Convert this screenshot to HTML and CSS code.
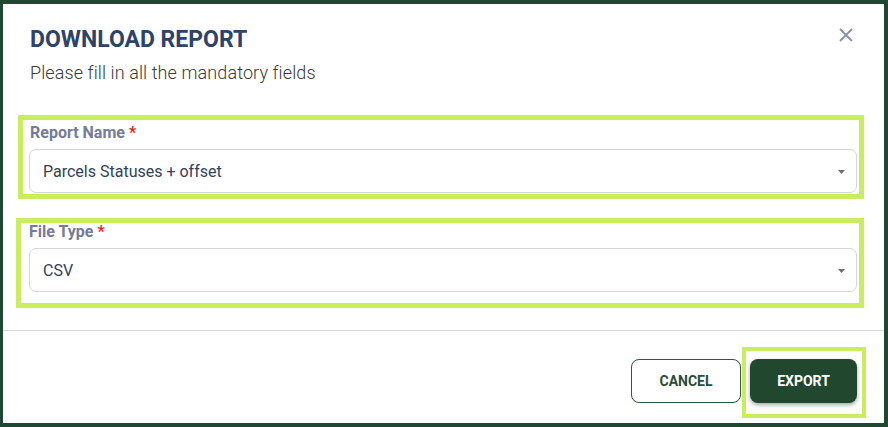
FILE: index.html
```html
<!DOCTYPE html>
<html>
<head>
    <title>Download Report</title>
    <link rel="stylesheet" href="styles.css">
</head>
<body>
    <div class="modal">
        <div class="modal-header">
            <div>
                <h1>DOWNLOAD REPORT</h1>
                <p class="subtitle">Please fill in all the mandatory fields</p>
            </div>
            <button class="close-button" aria-label="Close">
                <svg width="14" height="14" viewBox="0 0 14 14">
                    <path d="M1 1 L13 13 M13 1 L1 13" stroke="#8891a9" stroke-width="1.8" fill="none"/>
                </svg>
            </button>
        </div>

        <div class="field field-report">
            <label>Report Name <span class="required">*</span></label>
            <div class="select">
                <span>Parcels Statuses + offset</span>
                <svg class="caret" width="7" height="4" viewBox="0 0 7 4"><path d="M0 0 H7 L3.5 4 Z" fill="#6f6f6f"/></svg>
            </div>
        </div>

        <div class="field field-type">
            <label>File Type <span class="required">*</span></label>
            <div class="select">
                <span>CSV</span>
                <svg class="caret" width="7" height="4" viewBox="0 0 7 4"><path d="M0 0 H7 L3.5 4 Z" fill="#6f6f6f"/></svg>
            </div>
        </div>

        <div class="modal-footer">
            <button class="cancel-button">CANCEL</button>
            <div class="export-wrap">
                <button class="export-button">EXPORT</button>
            </div>
        </div>
    </div>
</body>
</html>
```

FILE: styles.css
```css
body { margin: 0; background-color: #1f4832; font-family: Roboto, "Liberation Sans", sans-serif; }
.modal {
    margin: 4px 4px 4px 3px;
    height: 419px;
    background-color: #fff;
    display: flex;
    flex-direction: column;
}
.modal-header {
    display: flex;
    justify-content: space-between;
    align-items: flex-start;
    padding: 23px 31px 0 27px;
}
h1 { margin: 0; font-size: 23px; line-height: 26px; font-weight: 700; color: #2d4369; }
.subtitle { margin: 9px 0 0; font-size: 18px; line-height: 22px; font-weight: 300; color: #3a3a3a; letter-spacing: 0.1px; }
.close-button {
    margin-top: 1px;
    padding: 0;
    border: none;
    background: none;
    width: 14px;
    height: 14px;
    cursor: pointer;
}
.close-button svg { display: block; }

.field { border: 5px solid #c8ed5f; }
.field label {
    display: block;
    font-size: 16px;
    line-height: 19px;
    font-weight: 700;
    color: #767b97;
    margin-bottom: 7px;
}
.required { color: #f01c1c; }
.field-report { margin: 31px 20px 0 15px; padding: 3px 2px 1px 6px; }
.field-report label { padding-left: 1px; }
.field-type { margin: 19px 20px 0 13px; padding: 0 2px 11px 8px; }
.field-type label { margin-top: -1px; }

.select {
    height: 42px;
    border: 1px solid #d6d7dc;
    border-radius: 7px;
    padding: 0 11px 0 13px;
    display: flex;
    align-items: center;
    justify-content: space-between;
    font-size: 16px;
    color: #33415c;
}
.caret { display: block; margin-top: 2px; }

.modal-footer {
    margin-top: 22px;
    border-top: 1px solid #dadce2;
    display: flex;
    justify-content: flex-end;
    align-items: flex-start;
    padding: 16px 18px 0 0;
}
.cancel-button {
    margin-top: 12px;
    width: 110px;
    height: 44px;
    border: 1px solid #2b5a40;
    border-radius: 8px;
    background: #fff;
    color: #2a4d3a;
    font-family: inherit;
    font-size: 14px;
    font-weight: 700;
    cursor: pointer;
}
.export-wrap {
    margin-left: 1px;
    border: 4px solid #c8ed5f;
    padding: 8px 5px 11px 4px;
}
.export-button {
    display: block;
    width: 107px;
    height: 44px;
    border: none;
    border-radius: 8px;
    background-color: #21482f;
    color: #fff;
    font-family: inherit;
    font-size: 14px;
    font-weight: 700;
    box-shadow: 0 2px 4px rgba(0, 0, 0, 0.35);
    cursor: pointer;
}
```
